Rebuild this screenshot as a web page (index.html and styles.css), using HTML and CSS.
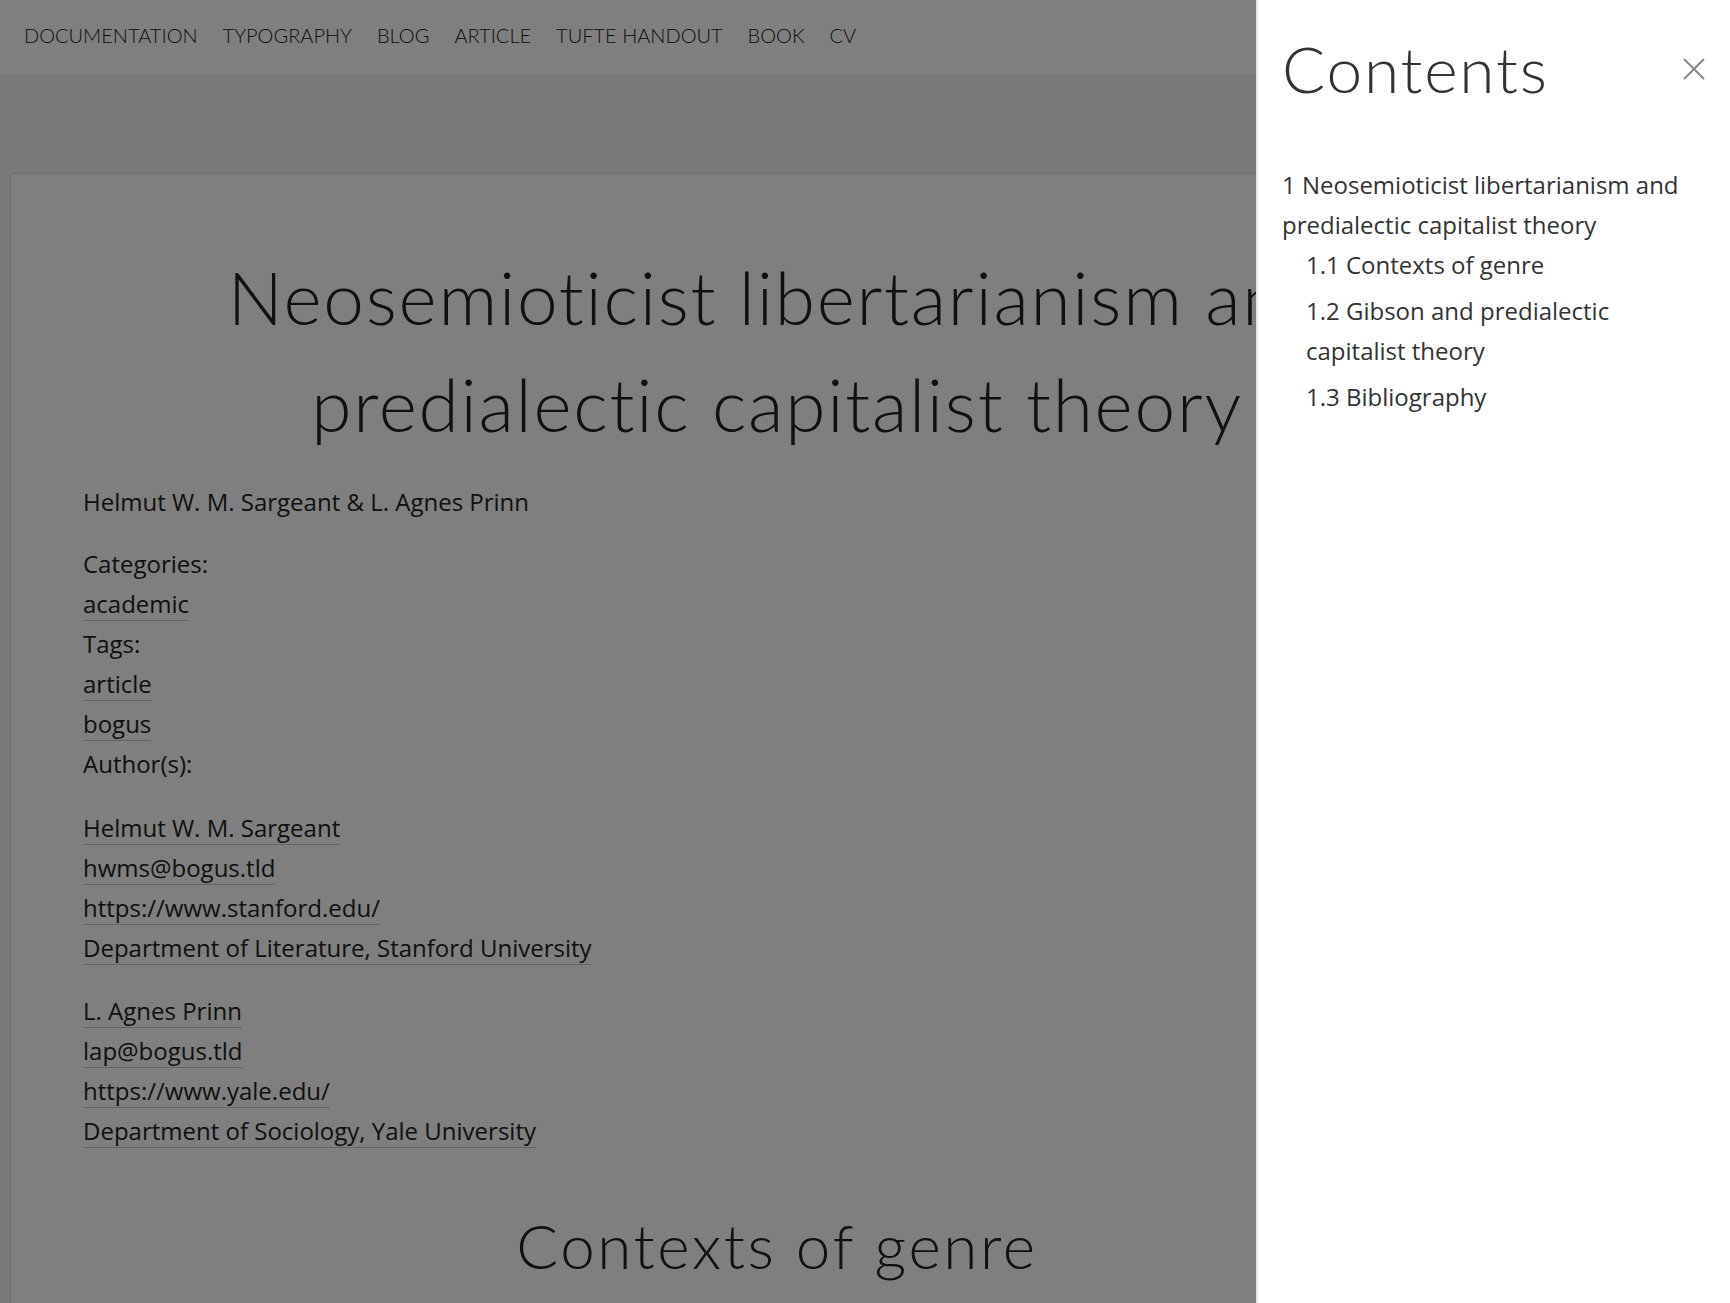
FILE: index.html
```html
<!DOCTYPE html>
<html lang="en">
<head>
<meta charset="utf-8">
<title>Neosemioticist libertarianism and predialectic capitalist theory</title>
<link rel="stylesheet" href="styles.css">
</head>
<body>
<header class="topnav">
  <a class="nav-item" href="#">Documentation</a>
  <a class="nav-item" href="#">Typography</a>
  <a class="nav-item" href="#">Blog</a>
  <a class="nav-item" href="#">Article</a>
  <a class="nav-item" href="#">Tufte Handout</a>
  <a class="nav-item" href="#">Book</a>
  <a class="nav-item" href="#">CV</a>
</header>

<main class="page">
  <article class="card">
    <h1 class="title">Neosemioticist libertarianism and predialectic capitalist theory</h1>
    <p class="byline">Helmut W. M. Sargeant &amp; L. Agnes Prinn</p>

    <div class="meta">
      <div>Categories:</div>
      <div><a class="link" href="#">academic</a></div>
      <div>Tags:</div>
      <div><a class="link" href="#">article</a></div>
      <div><a class="link" href="#">bogus</a></div>
      <div>Author(s):</div>
    </div>

    <div class="author">
      <div><a class="link" href="#">Helmut W. M. Sargeant</a></div>
      <div><a class="link" href="#">hwms@bogus.tld</a></div>
      <div><a class="link" href="#">https://www.stanford.edu/</a></div>
      <div><a class="link" href="#">Department of Literature, Stanford University</a></div>
    </div>

    <div class="author">
      <div><a class="link" href="#">L. Agnes Prinn</a></div>
      <div><a class="link" href="#">lap@bogus.tld</a></div>
      <div><a class="link" href="#">https://www.yale.edu/</a></div>
      <div><a class="link" href="#">Department of Sociology, Yale University</a></div>
    </div>

    <h2 class="section">Contexts of genre</h2>
  </article>
</main>

<div class="overlay"></div>

<aside class="toc">
  <h2 class="toc-title">Contents</h2>
  <button class="toc-close" aria-label="Close">
    <svg width="22" height="22" viewBox="0 0 22 22"><path d="M1 1 L21 21 M21 1 L1 21" stroke="#888" stroke-width="2" fill="none"/></svg>
  </button>
  <ul class="toc-list">
    <li>1 Neosemioticist libertarianism and predialectic capitalist theory
      <ul class="toc-sub">
        <li>1.1 Contexts of genre</li>
        <li>1.2 Gibson and predialectic capitalist theory</li>
        <li>1.3 Bibliography</li>
      </ul>
    </li>
  </ul>
</aside>
</body>
</html>
```

FILE: styles.css
```css
html, body {
  margin: 0;
  padding: 0;
  overflow: hidden;
  height: 100%;
}

body {
  background: #f4f4f4;
  color: #222;
  font-family: "Open Sans", "Liberation Sans", sans-serif;
  font-size: 24px;
  line-height: 40px;
}

.topnav {
  height: 76px;
  box-sizing: border-box;
  background: #fff;
  border-bottom: 1px solid #e6e6e6;
  display: flex;
  align-items: center;
  gap: 25px;
  padding: 0 0 6px 24px;
}

.nav-item {
  font-family: Lato, "Liberation Sans", sans-serif;
  font-weight: 300;
  font-size: 20px;
  letter-spacing: 0;
  text-transform: uppercase;
  color: #222;
  text-decoration: none;
}

.page {
  padding: 97px 0 0 10px;
}

.card {
  width: 1534px;
  box-sizing: border-box;
  background: #fff;
  border: 1px solid #dedede;
  padding: 70px 72px 200px 72px;
}

.title {
  font-family: Lato, "Liberation Sans", sans-serif;
  font-weight: 300;
  font-size: 73px;
  line-height: 107px;
  letter-spacing: 1.75px;
  text-align: center;
  max-width: 1240px;
  margin: 0 auto;
  color: #222;
}

.byline {
  margin: 24px 0 0 0;
}

.meta {
  margin-top: 22px;
}

.author {
  margin-top: 24px;
}

.author + .author {
  margin-top: 23px;
}

.link {
  color: #222;
  text-decoration: none;
  border-bottom: 1px solid #c8c8c8;
}

.section {
  font-family: Lato, "Liberation Sans", sans-serif;
  font-weight: 300;
  font-size: 62px;
  line-height: 72px;
  letter-spacing: 2.6px;
  text-align: center;
  margin: 58px 0 0 0;
  color: #222;
}

.overlay {
  position: fixed;
  inset: 0;
  background: rgba(0, 0, 0, 0.5);
  z-index: 10;
}

.toc {
  position: fixed;
  top: 0;
  right: 0;
  bottom: 0;
  width: 474px;
  box-sizing: border-box;
  background: #fff;
  border-left: 2px solid #e6e6e6;
  padding: 30px 24px 0 24px;
  z-index: 20;
  color: #333;
}

.toc-title {
  font-family: Lato, "Liberation Sans", sans-serif;
  font-weight: 300;
  font-size: 64px;
  line-height: 77px;
  letter-spacing: 1.8px;
  margin: 0;
  color: #333;
}

.toc-close {
  position: absolute;
  top: 58px;
  left: 425px;
  width: 22px;
  height: 22px;
  padding: 0;
  border: 0;
  background: none;
  cursor: pointer;
}

.toc-close svg {
  display: block;
}

.toc-list {
  list-style: none;
  margin: 58px 0 0 0;
  padding: 0;
}

.toc-sub {
  list-style: none;
  margin: 0;
  padding: 0 0 0 24px;
}

.toc-sub li + li {
  margin-top: 6px;
}
```
